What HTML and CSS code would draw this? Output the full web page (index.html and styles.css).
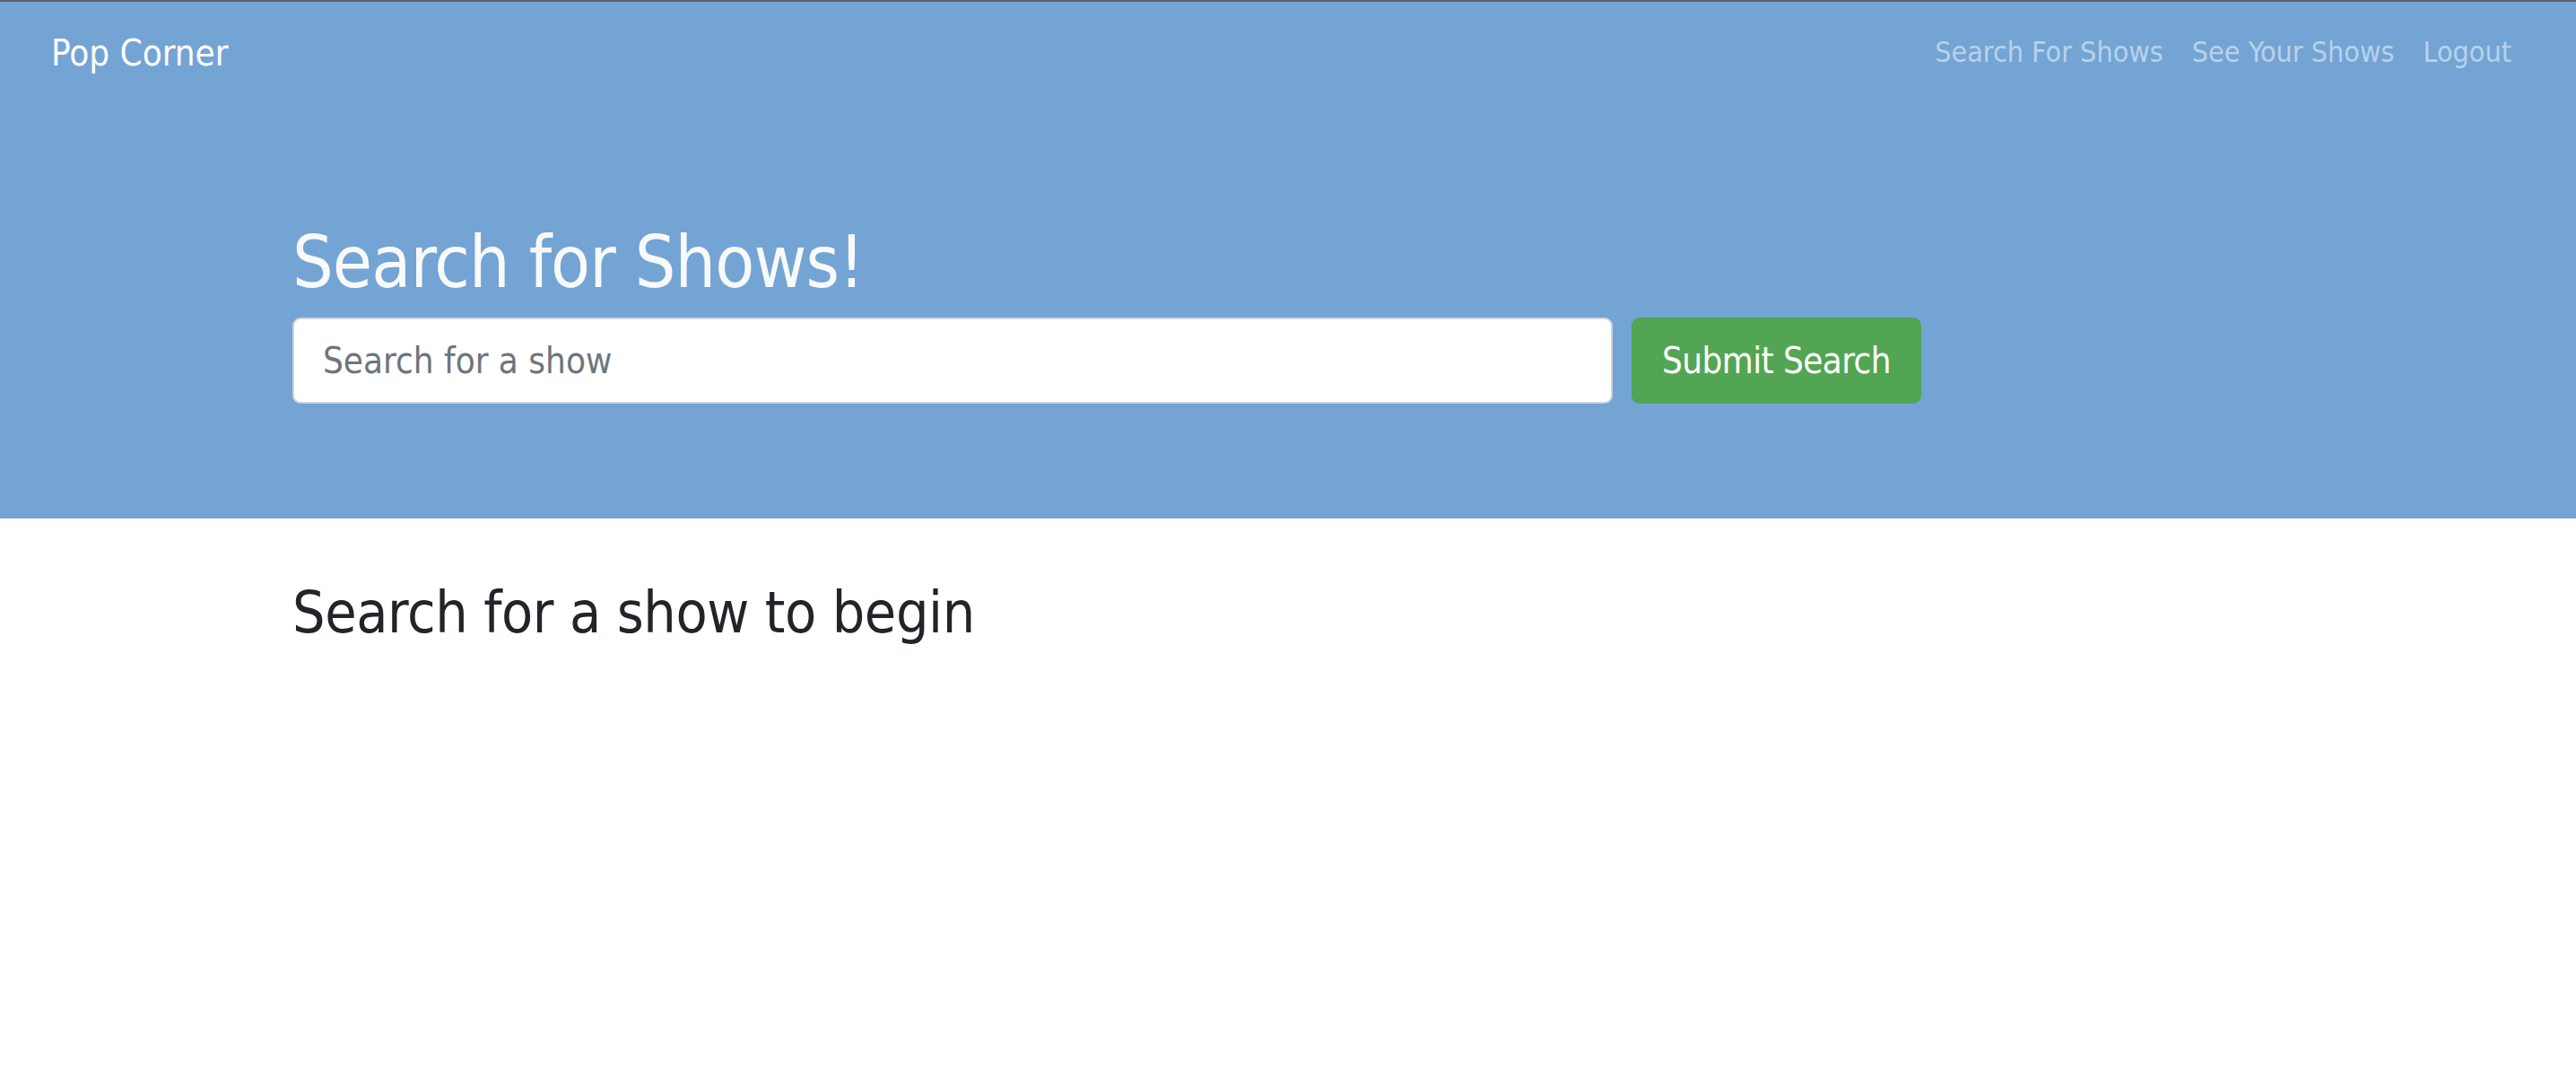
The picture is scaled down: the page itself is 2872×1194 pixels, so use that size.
FILE: index.html
```html
<!DOCTYPE html>
<html lang="en">
<head>
<meta charset="utf-8">
<title>Pop Corner</title>
<link rel="stylesheet" href="styles.css">
</head>
<body>
<header class="hero">
  <nav class="navbar">
    <a class="brand" href="#">Pop Corner</a>
    <ul class="nav-links">
      <li><a class="nav-link" href="#">Search For Shows</a></li>
      <li><a class="nav-link" href="#">See Your Shows</a></li>
      <li><a class="nav-link" href="#">Logout</a></li>
    </ul>
  </nav>
  <div class="container hero-body">
    <h1 class="hero-title">Search for Shows!</h1>
    <form class="search-form">
      <input class="search-input" type="text" name="q" placeholder="Search for a show">
      <button class="btn-submit" type="submit">Submit Search</button>
    </form>
  </div>
</header>
<main class="container results">
  <h2 class="results-title">Search for a show to begin</h2>
</main>
</body>
</html>
```
FILE: styles.css
```css
* { box-sizing: border-box; }

html, body {
  margin: 0;
  padding: 0;
  background: #ffffff;
}

body {
  font-family: "DejaVu Sans Condensed", "DejaVu Sans", sans-serif;
  font-stretch: condensed;
  color: #212529;
}

.container {
  width: 2220px;
  margin: 0 auto;
}

.hero {
  background: #73a4d4;
  border-top: 2px solid #5d6066;
}

.navbar {
  display: flex;
  align-items: center;
  justify-content: space-between;
  padding: 16px 56px 16px 57px;
}

.brand {
  display: block;
  padding: 11px 0 9px;
  font-size: 40px;
  line-height: 60px;
  color: #ffffff;
  text-decoration: none;
}

.nav-links {
  display: flex;
  list-style: none;
  margin: 0;
  padding: 0;
}

.nav-link {
  display: block;
  padding: 16px 16px;
  font-size: 32px;
  line-height: 48px;
  color: #b9d2ea;
  text-decoration: none;
}

.hero-body {
  padding: 131px 0 128px;
}

.hero-title {
  margin: 0 0 13px;
  font-size: 80px;
  font-weight: 400;
  line-height: 1.2;
  letter-spacing: -0.9px;
  color: #f8f9fa;
}

.search-form {
  display: flex;
  align-items: center;
  gap: 21px;
}

.search-input {
  width: 1472px;
  height: 96px;
  padding: 16px 32px;
  font-family: inherit;
  font-stretch: condensed;
  font-size: 40px;
  line-height: 60px;
  color: #495057;
  background: #ffffff;
  border: 2px solid #ced4da;
  border-radius: 9px;
  outline: none;
}

.search-input::placeholder {
  color: #6c757d;
  opacity: 1;
}

.btn-submit {
  height: 96px;
  padding: 16px 32px;
  font-family: inherit;
  font-stretch: condensed;
  font-size: 40px;
  line-height: 60px;
  letter-spacing: -0.6px;
  color: #ffffff;
  background: #52a552;
  border: 2px solid #52a552;
  border-radius: 9px;
  cursor: pointer;
}

.results {
  padding-top: 67px;
}

.results-title {
  margin: 0;
  font-size: 64px;
  font-weight: 400;
  line-height: 1.2;
  letter-spacing: -0.4px;
  color: #212529;
}
```
